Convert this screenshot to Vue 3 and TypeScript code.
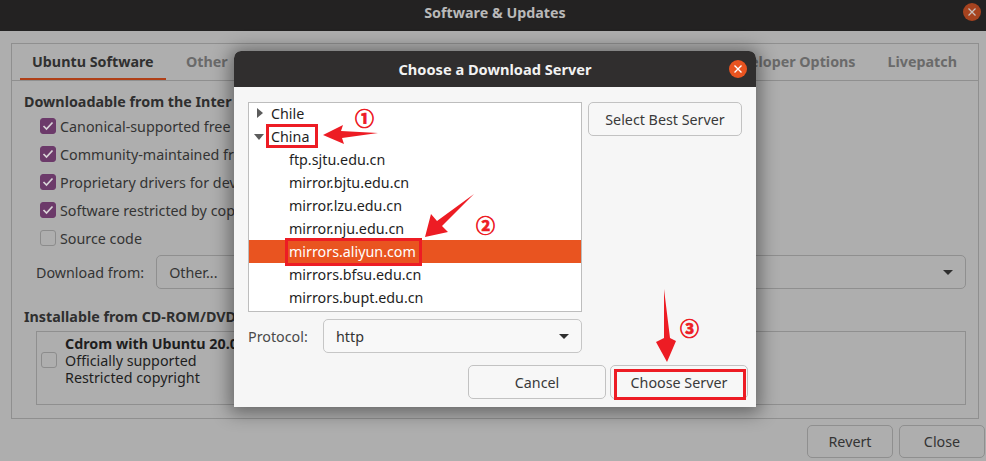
<script setup lang="ts">
const repos: string[] = [
  'Canonical-supported free',
  'Community-maintained fre',
  'Proprietary drivers for dev',
  'Software restricted by cop',
]
const mirrors: string[] = [
  'ftp.sjtu.edu.cn',
  'mirror.bjtu.edu.cn',
  'mirror.lzu.edu.cn',
  'mirror.nju.edu.cn',
  'mirrors.aliyun.com',
  'mirrors.bfsu.edu.cn',
  'mirrors.bupt.edu.cn',
]
</script>

<template>
  <div class="screen">
    <header class="titlebar">
      <span class="title">Software &amp; Updates</span>
      <span class="wclose dim"><svg width="10" height="10" viewBox="0 0 10 10"><path d="M1.5 1.5l7 7M8.5 1.5l-7 7" stroke="#c9c0bc" stroke-width="1.3" /></svg></span>
    </header>

    <main class="content">
      <section class="notebook">
        <nav class="tabs">
          <span class="tab active">Ubuntu Software</span>
          <span class="tab">Other</span>
          <span class="spacer"></span>
          <span class="tab">eloper Options</span>
          <span class="tab">Livepatch</span>
        </nav>
        <div class="page">
          <h3 class="heading">Downloadable from the Inter</h3>
          <ul class="checks">
            <li v-for="r in repos" :key="r" class="check-row">
              <span class="cb on"><svg width="12" height="10" viewBox="0 0 12 10"><path d="M1.5 5l3 3 6-6.5" fill="none" stroke="#d9d4d8" stroke-width="1.7" /></svg></span>
              {{ r }}
            </li>
            <li class="check-row"><span class="cb"></span>Source code</li>
          </ul>
          <div class="from">
            <span class="from-label">Download from:</span>
            <div class="select wide"><span>Other...</span><i class="caret"></i></div>
          </div>
          <h3 class="heading second">Installable from CD-ROM/DVD</h3>
          <div class="cdrom">
            <span class="cb cd-cb"></span>
            <div class="cd-text">
              <b>Cdrom with Ubuntu 20.0</b>
              <span>Officially supported</span>
              <span>Restricted copyright</span>
            </div>
          </div>
        </div>
      </section>
      <footer class="main-actions">
        <button class="btn ghost">Revert</button>
        <button class="btn ghost">Close</button>
      </footer>
    </main>
    <div class="dialog">
      <header class="dlg-title">
        <span>Choose a Download Server</span>
        <span class="wclose"><svg width="10" height="10" viewBox="0 0 10 10"><path d="M1.5 1.5l7 7M8.5 1.5l-7 7" stroke="#fff" stroke-width="1.4" /></svg></span>
      </header>
      <div class="dlg-body">
        <div class="dlg-top">
          <div class="tree">
            <div class="row"><i class="tri right"></i>Chile</div>
            <div class="row"><i class="tri down"></i>China</div>
            <div
              v-for="m in mirrors"
              :key="m"
              class="row child"
              :class="{ selected: m === 'mirrors.aliyun.com' }"
            >{{ m }}</div>
          </div>
          <button class="btn best">Select Best Server</button>
        </div>
        <div class="proto">
          <span class="proto-label">Protocol:</span>
          <div class="select proto-select"><span>http</span><i class="caret"></i></div>
        </div>
        <div class="dlg-actions">
          <button class="btn act">Cancel</button>
          <button class="btn act">Choose Server</button>
        </div>
      </div>
    </div>

    <svg class="marks" width="986" height="461" viewBox="0 0 986 461">
      <g fill="none" stroke="#ed1c24" stroke-width="3">
        <rect x="267.5" y="125.5" width="49" height="21" />
        <rect x="286.5" y="239.5" width="134" height="25" />
        <rect x="615.5" y="370.5" width="129" height="28" />
      </g>
      <g fill="#ed1c24">
        <polygon points="323,135 343,125 341,131 378,133 342,138 344,144" />
        <polygon points="425,237 431,214 437,221 474,194 442,226 448,232" />
        <polygon points="667,362 656,342 664,338 664,289 670,338 676,341" />
      </g>
    </svg>
    <span class="num n1">①</span>
    <span class="num n2">②</span>
    <span class="num n3">③</span>
  </div>
</template>

<style>
html, body { margin: 0; padding: 0; }
</style>

<style scoped>
.screen {
  position: relative;
  width: 986px;
  height: 461px;
  overflow: hidden;
  background: #aeaeae;
  font-family: "Noto Sans", "Open Sans", sans-serif;
  font-size: 14.3px;
  color: #2b2b2b;
}
.titlebar {
  height: 31px;
  box-sizing: border-box;
  padding: 0 0 6px 4px;
  background: #232222;
  display: flex;
  align-items: center;
  justify-content: center;
  position: relative;
}
.title { color: #b9b9b9; font-weight: 700; font-size: 14.3px; }
.wclose {
  width: 18px;
  height: 18px;
  border-radius: 50%;
  background: #e95420;
  display: flex;
  align-items: center;
  justify-content: center;
  position: absolute;
  right: 9px;
  top: 9px;
}
.wclose.dim { background: #a6431f; right: 5px; top: 3px; }
.content { padding: 12px 7px 0 11px; }
.notebook { border: 1px solid #8f8f8f; height: 376px; box-sizing: border-box; width: 968px; }
.tabs {
  display: flex;
  height: 36px;
  padding: 0 9px 0 8px;
  border-bottom: 1px solid #8f8f8f;
  font-weight: 700;
  color: #6a6a6a;
  font-size: 14.3px;
}
.tab { padding: 0 12px 2px; display: flex; align-items: center; margin-right: 8px; position: relative; }
.tab:last-child { margin-right: 0; }
.tab.active { color: #303030; width: 122px; white-space: nowrap; box-shadow: inset 0 -2px 0 #b04018; }
.spacer { flex: 1; }
.page { padding: 12px 12px 0 12px; }
.heading { margin: 0; font-size: 14.3px; font-weight: 700; line-height: 18px; color: #2f2f2f; }
.heading.second { margin-top: 19px; }
.checks { list-style: none; margin: 1px 0 0; padding: 0 0 0 16px; }
.check-row { display: flex; align-items: center; height: 28px; gap: 4px; white-space: nowrap; color: #343434; }
.cb {
  width: 14px;
  height: 14px;
  border: 1px solid #8c8c8c;
  border-radius: 3px;
  display: flex;
  align-items: center;
  justify-content: center;
  flex: none;
}
.cb.on { background: #6c3a6a; border-color: #6c3a6a; }
.cd-cb { margin-top: -16px; }
.from { display: flex; align-items: center; gap: 12px; margin: 3px 0 0 12px; color: #343434; }
.from-label { white-space: nowrap; }
.select {
  height: 34px;
  box-sizing: border-box;
  border: 1px solid #8f8f8f;
  border-radius: 5px;
  display: flex;
  align-items: center;
  justify-content: space-between;
  padding: 0 12px;
}
.select.wide { width: 810px; }
.caret {
  width: 0;
  height: 0;
  border-left: 5px solid transparent;
  border-right: 5px solid transparent;
  border-top: 5px solid #2f2f2f;
}
.cdrom {
  margin: 5px 0 0 12px;
  width: 930px;
  height: 74px;
  box-sizing: border-box;
  border: 1px solid #8f8f8f;
  display: flex;
  align-items: center;
  padding-left: 4px;
  gap: 8px;
}
.cd-text { display: flex; flex-direction: column; line-height: 17px; margin-top: -16px; color: #1e1e1e; white-space: nowrap; }
.main-actions { display: flex; justify-content: flex-end; gap: 6px; margin: 6px -6px 0 0; }
.btn {
  font: inherit;
  height: 34px;
  border-radius: 5px;
  box-sizing: border-box;
  border: 1px solid #c2c2c2;
  background: #f7f7f7;
  color: #3a3a3a;
  padding: 0;
}
.btn.ghost { width: 86px; background: #aeaeae; border-color: #8f8f8f; height: 33px; color: #343434; }
.dialog {
  position: absolute;
  left: 234px;
  top: 51px;
  width: 522px;
  height: 356px;
  border-radius: 7px 7px 0 0;
  overflow: visible;
  background: #f6f6f6;
  box-shadow: 0 2px 18px 4px rgba(0, 0, 0, .42);
}
.dlg-title {
  height: 36px;
  background: #302e2e;
  border-radius: 7px 7px 0 0;
  color: #f2f2f2;
  font-weight: 700;
  font-size: 14.6px;
  display: flex;
  align-items: center;
  justify-content: center;
  position: relative;
}
.dlg-body { padding: 15px 14px 0; }
.dlg-top { display: flex; align-items: flex-start; gap: 6px; }
.tree {
  width: 334px;
  height: 210px;
  box-sizing: border-box;
  border: 1px solid #bdbdbd;
  background: #fff;
  overflow: hidden;
  color: #1f1f1f;
}
.row { height: 23px; line-height: 23px; padding-left: 22px; position: relative; white-space: nowrap; }
.row:first-child { margin-top: -1px; }
.row.child { padding-left: 40px; }
.row.selected { background: #e95420; color: #fff; }
.tri { position: absolute; width: 0; height: 0; }
.tri.right { left: 8px; top: 6px; border-top: 5px solid transparent; border-bottom: 5px solid transparent; border-left: 6px solid #5c5c5c; }
.tri.down { left: 5px; top: 9px; border-left: 5px solid transparent; border-right: 5px solid transparent; border-top: 6px solid #5c5c5c; }
.btn.best { width: 154px; }
.proto { display: flex; align-items: center; margin-top: 7px; }
.proto-label { width: 75px; color: #4a4a4a; }
.proto-select { width: 259px; border-color: #c6c6c6; background: #f8f8f8; color: #333; }
.dlg-actions { display: flex; justify-content: flex-end; gap: 4px; margin: 12px -6px 0 0; }
.btn.act { width: 138px; }
.marks { position: absolute; left: 0; top: 0; pointer-events: none; }
.num {
  position: absolute;
  font-family: "Noto Sans CJK SC", sans-serif;
  font-size: 19px;
  font-weight: 700;
  line-height: 20px;
  color: #ed1c24;
  -webkit-text-stroke: 0.7px #ed1c24;
}
.n1 { left: 355px; top: 108px; }
.n2 { left: 476px; top: 215px; }
.n3 { left: 680px; top: 318px; }
</style>
